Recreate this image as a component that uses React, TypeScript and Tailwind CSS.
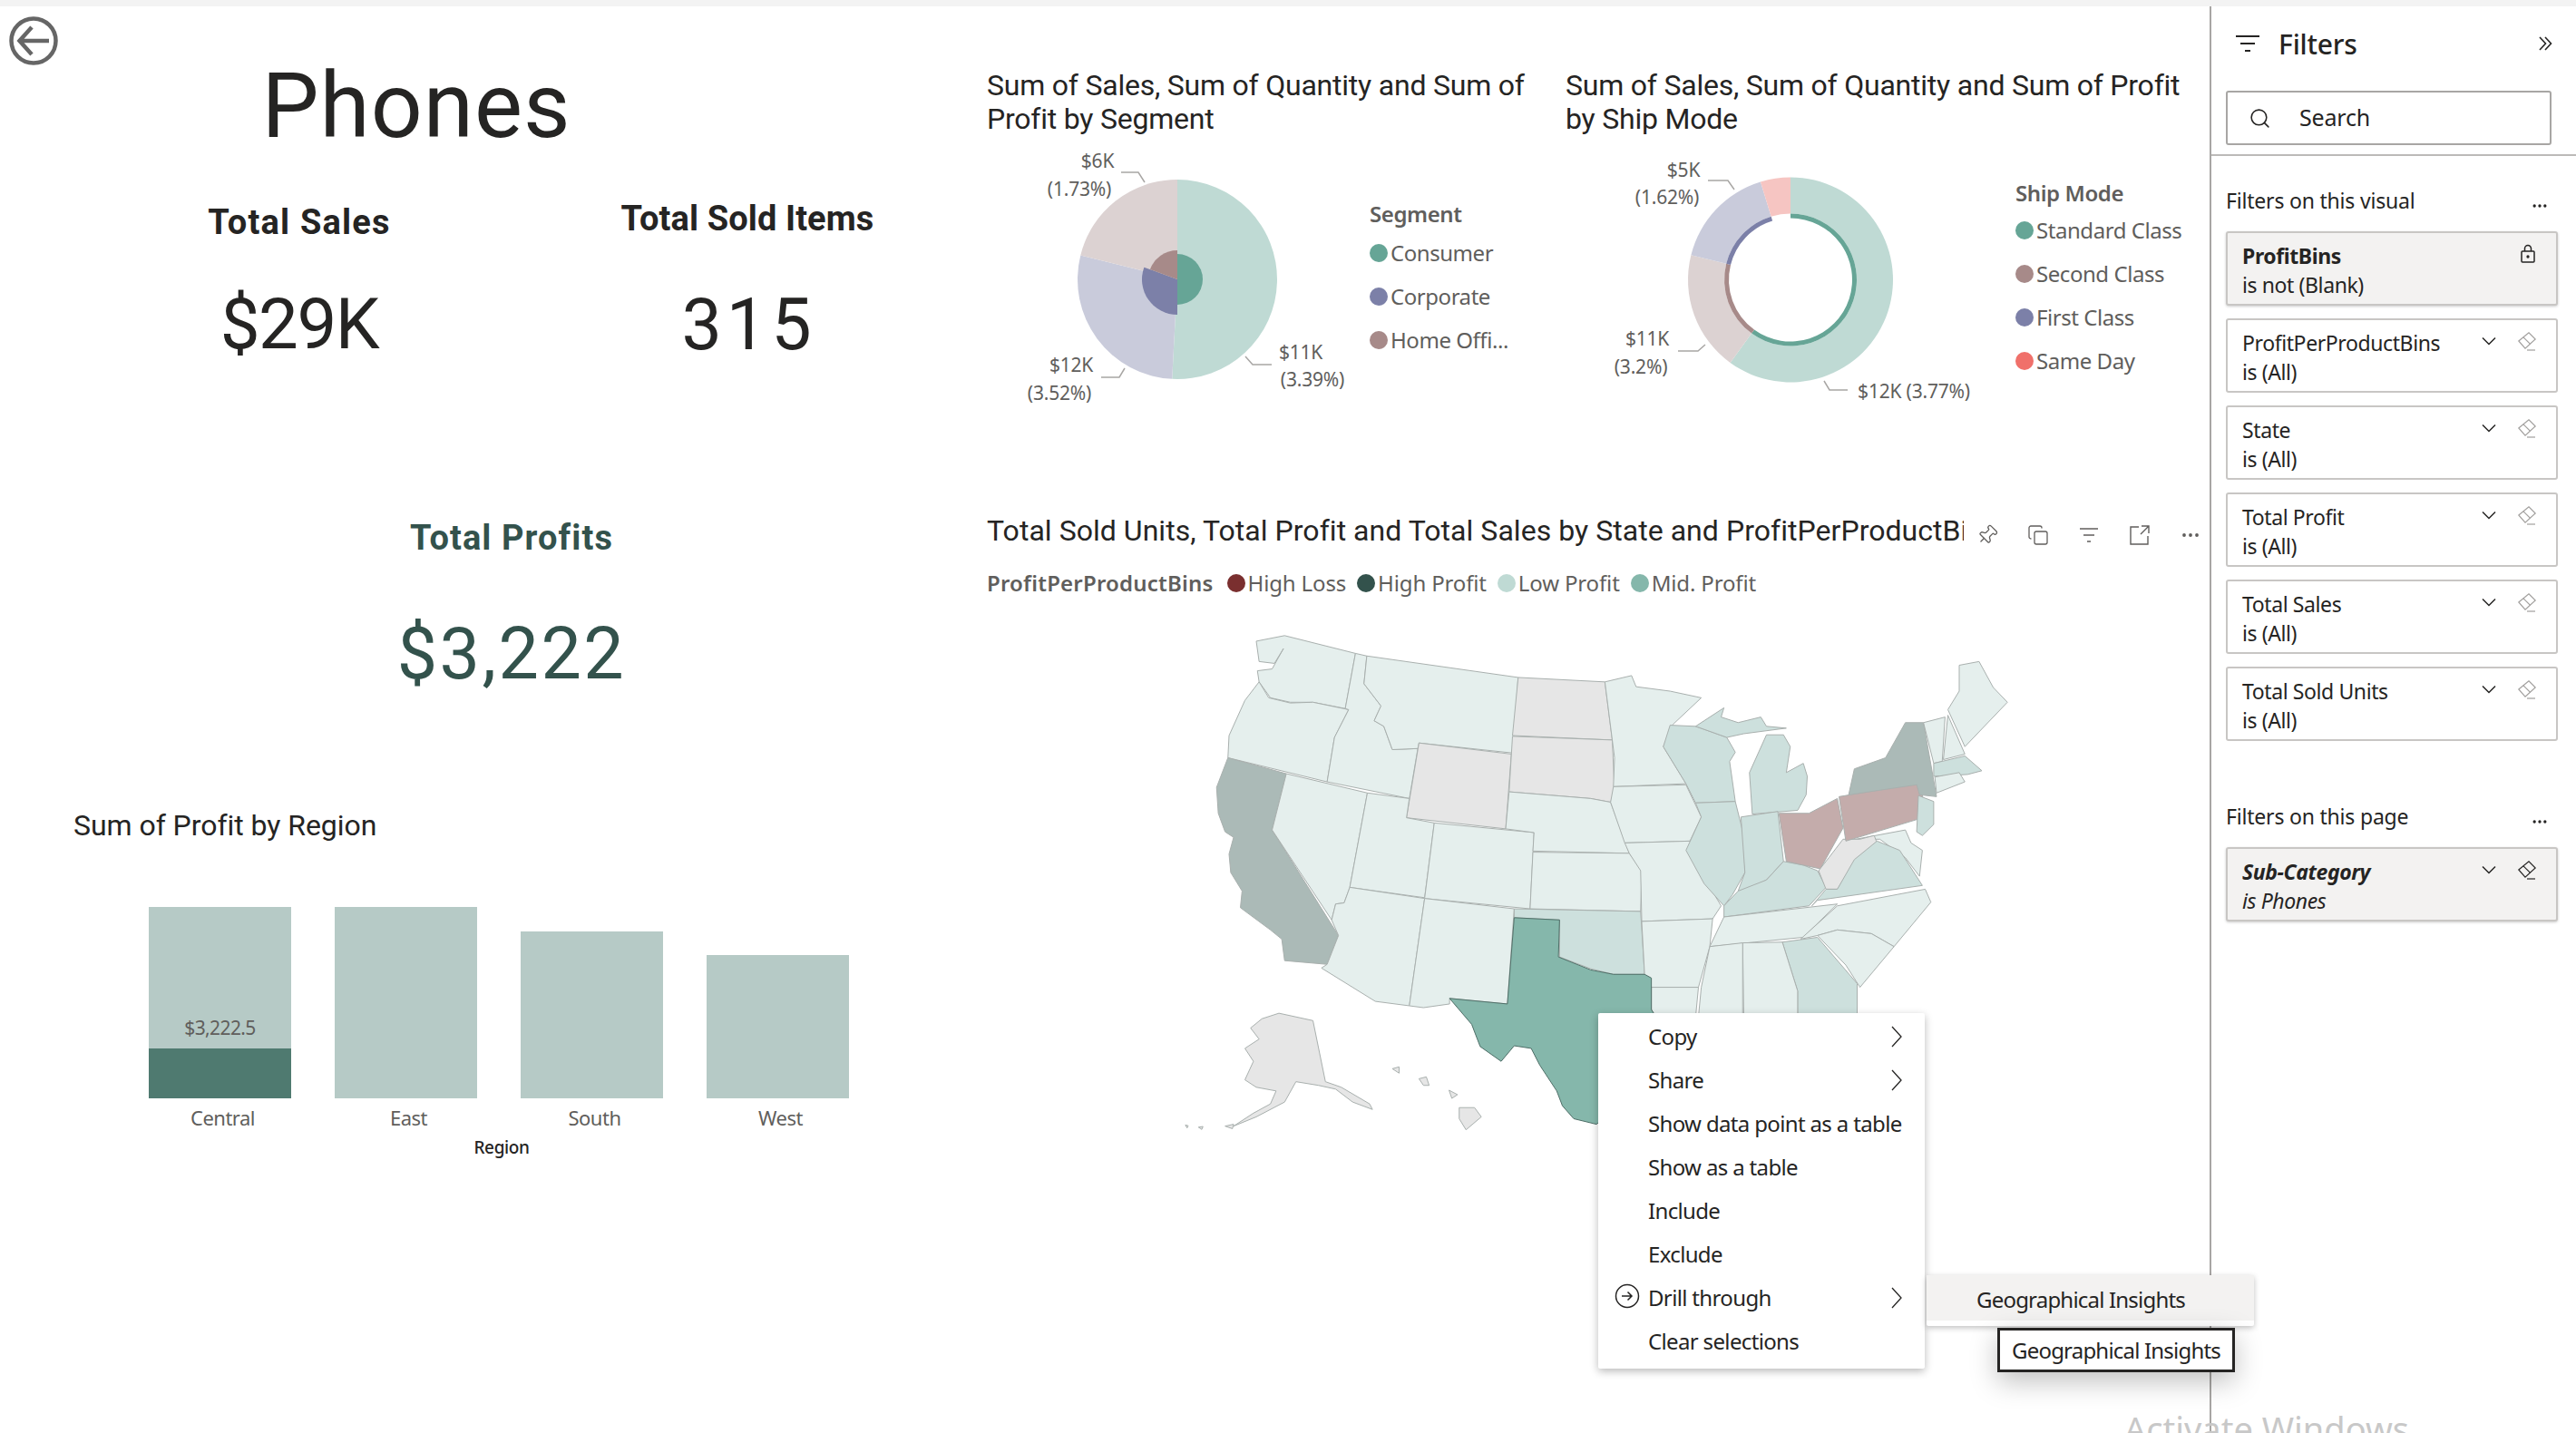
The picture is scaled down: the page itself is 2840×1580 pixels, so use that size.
import { Copy, Ellipsis, Pin, Search } from 'lucide-react';

const cx = (...c: string[]) => c.join(' ');

// map shapes are traced in a 1568x1568 box that gets stretched to 980x640
const STATE_LIGHT = '#e5efed';
const STATE_MID = '#cde0dd';
const STATE_GRAY = '#e6e6e6';

const states: { fill: string; pts: string; stroke?: string }[] = [
    { fill: STATE_LIGHT, pts: '200,115 250,100 375,148 357,297 300,280 260,280 225,268 205,225 202,195 228,190 248,135 232,175 205,170' },
    { fill: STATE_LIGHT, pts: '205,225 222,268 260,282 300,280 363,300 338,375 325,495 150,430 152,370 180,275' },
    { fill: '#abbab7', pts: '150,430 253,473 228,625 345,910 325,988 250,978 245,920 225,895 172,835 175,790 155,740 152,690 160,645 145,630 133,580 130,510' },
    { fill: STATE_LIGHT, pts: '253,473 396,525 365,780 355,822 340,825 333,868 228,625' },
    { fill: STATE_LIGHT, pts: '375,148 395,155 390,230 420,290 408,330 425,345 440,408 485,405 470,540 325,495 338,375 363,300 357,297' },
    { fill: STATE_LIGHT, pts: '395,155 662,213 652,417 487,390 485,405 440,408 425,345 408,330 420,290 390,230' },
    { fill: STATE_GRAY, pts: '487,390 650,420 640,622 465,592' },
    { fill: STATE_LIGHT, pts: '396,525 470,540 465,592 514,606 497,808 365,780' },
    { fill: STATE_LIGHT, pts: '365,780 497,810 470,1100 410,1088 315,998 325,988 345,910 333,868 340,825 355,822' },
    { fill: STATE_LIGHT, pts: '514,606 690,632 683,838 497,810' },
    { fill: STATE_LIGHT, pts: '497,810 655,838 643,1095 541,1080 541,1095 495,1105 470,1100' },
    { fill: STATE_GRAY, pts: '662,213 815,225 828,382 652,370' },
    { fill: STATE_GRAY, pts: '652,372 828,382 832,520 825,550 790,540 646,522' },
    { fill: STATE_LIGHT, pts: '646,522 790,540 825,550 858,688 688,682 690,632 640,622' },
    { fill: STATE_LIGHT, pts: '688,685 858,688 880,735 878,845 683,838' },
    { fill: STATE_MID, pts: '655,838 878,845 885,1015 830,1015 790,1000 735,968 735,868 655,862' },
    { fill: STATE_LIGHT, pts: '815,225 862,208 870,238 930,250 985,268 935,340 918,400 958,500 830,508 832,430 828,382' },
    { fill: STATE_LIGHT, pts: '830,508 958,503 985,590 965,655 850,660 825,550' },
    { fill: STATE_LIGHT, pts: '850,660 965,655 985,740 1020,830 1005,865 880,872 878,735 858,688' },
    { fill: STATE_LIGHT, pts: '880,872 1005,865 1000,940 980,1050 897,1050 885,1015' },
    { fill: STATE_LIGHT, pts: '897,1050 980,1050 975,1130 905,1130 897,1110' },
    { fill: STATE_MID, pts: '930,342 975,345 1030,375 1045,415 1035,440 1045,548 975,552 958,500 918,400' },
    { fill: STATE_MID, pts: '975,345 1000,320 1025,295 1020,320 1050,335 1090,320 1100,345 1135,350 1060,365 1030,375' },
    { fill: STATE_MID, pts: '1100,368 1130,368 1142,400 1135,470 1165,445 1172,480 1170,530 1155,572 1075,582 1070,470' },
    { fill: STATE_MID, pts: '975,552 1045,548 1060,640 1062,740 1040,800 1025,830 990,770 958,680 985,590' },
    { fill: STATE_MID, pts: '1055,590 1120,575 1130,710 1100,760 1060,790 1050,790 1062,740' },
    { fill: STATE_MID, pts: '1130,710 1165,720 1190,735 1205,780 1175,830 1025,860 1025,830 1050,790 1100,760' },
    { fill: '#c4acab', pts: '1122,580 1175,580 1225,540 1235,620 1195,730 1165,720 1135,710' },
    { fill: STATE_LIGHT, pts: '1240,655 1345,625 1355,660 1375,680 1370,750 1345,700 1300,650 1265,650' },
    { fill: STATE_GRAY, pts: '1210,700 1235,650 1265,650 1290,640 1295,660 1260,700 1225,785 1205,785 1192,735' },
    { fill: STATE_MID, pts: '1180,830 1205,785 1225,785 1255,705 1295,655 1335,680 1375,775 1190,815' },
    { fill: '#c4acab', pts: '1228,535 1365,500 1375,530 1380,590 1240,655' },
    { fill: '#abbab7', pts: '1245,530 1255,460 1310,430 1345,335 1377,335 1400,535 1370,530 1365,503' },
    { fill: STATE_MID, pts: '1368,532 1395,548 1395,610 1375,640 1365,630' },
    { fill: STATE_LIGHT, pts: '1377,335 1415,320 1410,440 1395,445' },
    { fill: STATE_LIGHT, pts: '1420,315 1450,420 1412,435' },
    { fill: STATE_LIGHT, pts: '1440,180 1475,170 1500,240 1525,280 1450,400 1420,300 1440,250' },
    { fill: STATE_MID, pts: '1395,445 1450,425 1480,465 1455,475 1395,480' },
    { fill: STATE_LIGHT, pts: '1397,482 1440,470 1450,495 1400,525' },
    { fill: STATE_LIGHT, pts: '1025,860 1225,825 1165,915 1000,940' },
    { fill: STATE_LIGHT, pts: '1160,920 1225,830 1380,785 1390,820 1325,940 1285,905 1225,895 1190,910' },
    { fill: STATE_LIGHT, pts: '1190,910 1225,895 1285,905 1325,940 1265,1050 1240,990' },
    { fill: STATE_MID, pts: '1128,928 1190,915 1260,1040 1260,1130 1155,1130 1155,1060' },
    { fill: STATE_LIGHT, pts: '1058,930 1128,928 1155,1060 1155,1130 1060,1130' },
    { fill: STATE_LIGHT, pts: '1000,940 1058,930 1058,1130 980,1130 985,1050' },
    { fill: '#85b7ab', stroke: '#4f6f68', pts: '655,862 735,868 733,968 790,1003 830,1015 885,1015 897,1025 897,1110 905,1130 900,1300 800,1420 760,1405 740,1370 730,1330 700,1260 685,1215 655,1208 632,1250 595,1210 580,1150 541,1080 643,1095' },
    { fill: STATE_GRAY, pts: '210,1135 240,1120 300,1140 322,1305 350,1320 400,1365 405,1380 370,1360 340,1325 310,1315 270,1305 250,1360 200,1400 160,1425 195,1390 225,1365 235,1330 200,1320 180,1300 195,1250 180,1215 205,1190 190,1160' },
    { fill: STATE_GRAY, pts: '145,1425 160,1420 158,1432' },
    { fill: STATE_GRAY, pts: '98,1428 106,1426 104,1434' },
    { fill: STATE_GRAY, pts: '75,1422 80,1424 78,1430' },
    { fill: STATE_GRAY, pts: '558,1375 585,1375 597,1400 570,1435 558,1405' },
    { fill: STATE_GRAY, pts: '487,1297 500,1292 505,1315 495,1315' },
    { fill: STATE_GRAY, pts: '440,1270 452,1265 452,1282' },
    { fill: STATE_GRAY, pts: '540,1328 555,1340 545,1350' },
];

function slice(cxp: number, cyp: number, r0: number, r1: number, a0: number, a1: number) {
    const p = (r: number, a: number) => {
        const t = ((a - 90) * Math.PI) / 180;
        return `${cxp + r * Math.cos(t)} ${cyp + r * Math.sin(t)}`;
    };
    const large = a1 - a0 > 180 ? 1 : 0;
    if (r0 === 0) return `M${cxp} ${cyp}L${p(r1, a0)}A${r1} ${r1} 0 ${large} 1 ${p(r1, a1)}Z`;
    return `M${p(r0, a0)}L${p(r1, a0)}A${r1} ${r1} 0 ${large} 1 ${p(r1, a1)}L${p(r0, a1)}A${r0} ${r0} 0 ${large} 0 ${p(r0, a0)}Z`;
}

function ChartLabel({ x, y, children }: { x: number; y: number; children: string }) {
    return (
        <text x={x} y={y} textAnchor="middle" dominantBaseline="central" fontSize={21} fill="#605e5c" fontFamily="'Noto Sans', sans-serif" letterSpacing={-0.2}>
            {children}
        </text>
    );
}

function Leader({ points }: { points: string }) {
    return <polyline points={points} fill="none" stroke="#a8a6a4" strokeWidth={1.5} />;
}

function SegmentPie() {
    return (
        <svg width={412} height={290} viewBox="0 0 412 290" className="shrink-0">
            <path d={slice(210, 148, 0, 110, 0, 183)} fill="#bfdad4" />
            <path d={slice(210, 148, 0, 110, 183, 284)} fill="#c9cbdb" />
            <path d={slice(210, 148, 0, 110, 284, 360)} fill="#dcd2d2" />
            <path d={slice(210, 148, 0, 28, 0, 180)} fill="#66a596" />
            <path d={slice(210, 148, 0, 39, 180, 290)} fill="#7c80a8" />
            <path d={slice(210, 148, 0, 32, 290, 360)} fill="#a78a89" />
            <Leader points="148,30 167,30 174,41" />
            <Leader points="126,256 146,256 152,246" />
            <Leader points="314,242 293,242 285,233" />
            <ChartLabel x={122} y={17}>$6K</ChartLabel>
            <ChartLabel x={102} y={48}>(1.73%)</ChartLabel>
            <ChartLabel x={93} y={242}>$12K</ChartLabel>
            <ChartLabel x={80} y={273}>(3.52%)</ChartLabel>
            <ChartLabel x={346} y={228}>$11K</ChartLabel>
            <ChartLabel x={359} y={258}>(3.39%)</ChartLabel>
        </svg>
    );
}

function ShipDonut() {
    return (
        <svg width={492} height={290} viewBox="0 0 492 290" className="shrink-0">
            <path d={slice(248, 148.5, 73, 113, 0, 216)} fill="#bfdad4" />
            <path d={slice(248, 148.5, 73, 113, 216, 284)} fill="#dcd2d2" />
            <path d={slice(248, 148.5, 73, 113, 284, 343)} fill="#c9cbdb" />
            <path d={slice(248, 148.5, 73, 113, 343, 360)} fill="#f6c5c2" />
            <path d={slice(248, 148.5, 68, 73, 0, 216)} fill="#66a596" />
            <path d={slice(248, 148.5, 68, 73, 216, 284)} fill="#a78a89" />
            <path d={slice(248, 148.5, 68, 73, 284, 343)} fill="#7c80a8" />
            <Leader points="157,39 179,39 186,49" />
            <Leader points="124,227 146,227 154,220" />
            <Leader points="311,270 291,270 285,260" />
            <ChartLabel x={130} y={27}>$5K</ChartLabel>
            <ChartLabel x={112} y={57}>(1.62%)</ChartLabel>
            <ChartLabel x={90} y={213}>$11K</ChartLabel>
            <ChartLabel x={83} y={244}>(3.2%)</ChartLabel>
            <ChartLabel x={384} y={271}>$12K (3.77%)</ChartLabel>
        </svg>
    );
}

function LegendRow({ color, label }: { color: string; label: string }) {
    return (
        <div className="flex items-center gap-[3px] h-[48px] text-[24px] text-[#605e5c] tracking-[-0.45px] whitespace-nowrap">
            <span className="w-[20px] h-[20px] rounded-full shrink-0" style={{ backgroundColor: color }} />
            {label}
        </div>
    );
}

function MapLegend({ color, label }: { color: string; label: string }) {
    return (
        <span className="flex items-center gap-[3px]">
            <span className="w-[20px] h-[20px] rounded-full" style={{ backgroundColor: color }} />
            {label}
        </span>
    );
}

function UsMap() {
    return (
        <svg width={980} height={640} viewBox="0 0 1568 1568" preserveAspectRatio="none" className="ml-[172px] mt-[2px] block">
            {states.map((s, i) => (
                <polygon key={i} points={s.pts} fill={s.fill} stroke={s.stroke ?? '#a9b0ae'} strokeWidth={1} vectorEffect="non-scaling-stroke" strokeLinejoin="round" />
            ))}
        </svg>
    );
}

function Eraser({ color }: { color: string }) {
    return (
        <svg width={20} height={21} viewBox="0 0 20 21" fill="none" stroke={color} strokeWidth={1.2}>
            <path d="M.8 10 12 .8 19.2 8 8 18.2Z" />
            <path d="M6 5.8 13.6 13.4" />
            <path d="M10 20H19" />
        </svg>
    );
}

function FilterCard({ title, value, locked, active }: { title: string; value: string; locked?: boolean; active?: boolean }) {
    return (
        <div
            className={cx(
                'h-[82px] w-[366px] border-2 border-[#c8c6c4] rounded-[3px] pl-[16px] pr-[22px] flex text-[23px] leading-[32px] text-[#252423] tracking-[-0.4px]',
                active || locked ? 'bg-[#f3f2f1] shadow-[0_1px_3px_rgba(0,0,0,0.2)]' : 'bg-white',
            )}
        >
            <div className={cx('flex-1 pt-[9px]', active ? 'italic' : '')}>
                <div className={active || locked ? 'font-bold' : ''}>{title}</div>
                <div>{value}</div>
            </div>
            {locked ? (
                <div className="pt-[12px]">
                    <svg width={18} height={22} viewBox="0 0 18 22" fill="none" stroke="#252423" strokeWidth={1.5}>
                        <rect x={2} y={8} width={14} height={12} rx={1} />
                        <path d="M5.5 8V5a3.5 3.5 0 0 1 7 0v3" />
                        <circle cx={9} cy={14} r={0.9} fill="#252423" />
                    </svg>
                </div>
            ) : (
                <div className="flex items-start gap-[24px] pt-[13px]">
                    <svg width={16} height={20} viewBox="0 0 16 20" fill="none" stroke="#252423" strokeWidth={1.5}>
                        <path d="M1 6.5 8 13.5 15 6.5" />
                    </svg>
                    <Eraser color={active ? '#252423' : '#a19f9d'} />
                </div>
            )}
        </div>
    );
}

function SectionHead({ label, className }: { label: string; className: string }) {
    return (
        <div className={cx('h-[32px] w-[366px] flex items-center justify-between text-[23px] text-[#252423] tracking-[-0.2px]', className)}>
            {label}
            <Ellipsis size={20} color="#252423" strokeWidth={2} className="mt-[12px] mr-[10px]" />
        </div>
    );
}

function MenuItem({ label, sub, icon }: { label: string; sub?: boolean; icon?: boolean }) {
    return (
        <div className="h-[48px] flex items-center pl-[55px] pr-[20px] relative text-[24px] text-[#252423] tracking-[-0.65px] whitespace-nowrap">
            {icon && (
                <svg width={28} height={28} viewBox="0 0 28 28" fill="none" stroke="#252423" strokeWidth={1.5} className="absolute left-[18px] top-[8px]">
                    <circle cx={14} cy={14} r={12.5} />
                    <path d="M8 14h11M14.5 9.5l4.5 4.5-4.5 4.5" />
                </svg>
            )}
            <span className="flex-1">{label}</span>
            {sub && (
                <svg width={14} height={24} viewBox="0 0 14 24" fill="none" stroke="#252423" strokeWidth={1.3} className="absolute right-[24px]">
                    <path d="M2 1l10 11L2 23" />
                </svg>
            )}
        </div>
    );
}

export default function App() {
    const din = "font-['Roboto',sans-serif]";
    const region = [
        { name: 'Central', top: 0 },
        { name: 'East', top: 0 },
        { name: 'South', top: 27 },
        { name: 'West', top: 53 },
    ];

    return (
        <div className="w-[2840px] h-[1580px] overflow-hidden bg-white flex flex-col relative font-['Noto_Sans',sans-serif]">
            <div className="h-[7px] bg-[#f3f3f3] shrink-0" />
            <div className="flex-1 flex min-h-0">
                {/* left column */}
                <div className={cx('w-[1088px] shrink-0', din)}>
                    <svg width={54} height={54} viewBox="0 0 54 54" fill="none" stroke="#666666" strokeWidth={4.5} className="mt-[11px] ml-[10px] block">
                        <circle cx={27} cy={27} r={24.5} />
                        <path d="M44 27H12M25 12 11.5 27 25 42" />
                    </svg>
                    <div className="w-[918px] h-[90px] text-center text-[100px] leading-[90px] text-[#252423] tracking-[1px]">Phones</div>
                    <div className="flex text-[#252423]">
                        <div className="w-[660px] text-center pt-[4px]">
                            <div className="mt-[54px] h-[50px] text-[38px] leading-[50px] font-bold tracking-[1.2px]">Total Sales</div>
                            <div className="mt-[43px] h-[90px] text-[78px] leading-[90px] tracking-[-1.5px]">$29K</div>
                        </div>
                        <div className="w-[328px] text-center">
                            <div className="mt-[54px] h-[50px] text-[38px] leading-[50px] font-bold tracking-[0.1px]">Total Sold Items</div>
                            <div className="mt-[47px] h-[90px] text-[79px] leading-[90px] tracking-[5px] pl-[3px]">315</div>
                        </div>
                    </div>
                    <div className="ml-[340px] w-[448px] text-center text-[#33524c]">
                        <div className="mt-[165px] h-[50px] text-[38px] leading-[50px] font-bold tracking-[1.1px]">Total Profits</div>
                        <div className="mt-[58px] h-[90px] text-[79px] leading-[90px] tracking-[2.5px]">$3,222</div>
                    </div>
                    <div className="mt-[124px] ml-[81px] h-[40px] text-[32px] leading-[40px] text-[#252423] tracking-[-0.05px]">Sum of Profit by Region</div>
                    <div className="mt-[70px] ml-[164px] flex items-end gap-[48px] h-[211px]">
                        {region.map((r) => (
                            <div key={r.name} className="w-[157px] bg-[#b6cac6] flex flex-col justify-end" style={{ height: 211 - r.top }}>
                                {r.name === 'Central' && (
                                    <>
                                        <div className="text-center text-[21px] leading-[30px] mb-[8px] text-[#605e5c] font-['Noto_Sans',sans-serif] tracking-[-0.6px]">$3,222.5</div>
                                        <div className="h-[55px] bg-[#4f7a70]" />
                                    </>
                                )}
                            </div>
                        ))}
                    </div>
                    <div className="mt-[6px] ml-[167px] flex gap-[48px] font-['Noto_Sans',sans-serif] tracking-[-0.5px]">
                        {region.map((r) => (
                            <div key={r.name} className="w-[157px] h-[30px] text-center text-[22px] leading-[30px] text-[#605e5c]">{r.name}</div>
                        ))}
                    </div>
                    <div className="mt-[6px] ml-[353px] w-[400px] h-[24px] text-center text-[19px] leading-[24px] font-medium text-[#252423] font-['Noto_Sans',sans-serif] tracking-[-0.4px]">Region</div>
                </div>

                {/* middle column */}
                <div className="w-[1348px] shrink-0 pt-[69px]">
                    <div className="flex">
                        <div className="w-[638px] shrink-0">
                            <div className={cx('h-[74px] text-[32px] leading-[37px] text-[#252423] pr-[20px] tracking-[-0.22px]', din)}>Sum of Sales, Sum of Quantity and Sum of Profit by Segment</div>
                            <div className="mt-[10px] flex">
                                <SegmentPie />
                                <div className="ml-[10px] pt-[57px]">
                                    <div className="h-[38px] text-[24px] leading-[38px] font-semibold text-[#605e5c] tracking-[-0.4px]">Segment</div>
                                    <LegendRow color="#66a596" label="Consumer" />
                                    <LegendRow color="#7c80a8" label="Corporate" />
                                    <LegendRow color="#a78a89" label="Home Offi..." />
                                </div>
                            </div>
                        </div>
                        <div className="w-[710px] shrink-0">
                            <div className={cx('h-[74px] text-[32px] leading-[37px] text-[#252423] pr-[20px] tracking-[-0.22px]', din)}>Sum of Sales, Sum of Quantity and Sum of Profit by Ship Mode</div>
                            <div className="mt-[10px] flex">
                                <ShipDonut />
                                <div className="ml-[4px] pt-[36px]">
                                    <div className="h-[34px] text-[24px] leading-[34px] font-semibold text-[#605e5c] tracking-[-0.4px]">Ship Mode</div>
                                    <LegendRow color="#66a596" label="Standard Class" />
                                    <LegendRow color="#a78a89" label="Second Class" />
                                    <LegendRow color="#7c80a8" label="First Class" />
                                    <LegendRow color="#f0706a" label="Same Day" />
                                </div>
                            </div>
                        </div>
                    </div>

                    <div className="mt-[115px] h-[40px] flex items-center">
                        <div className={cx('w-[1077px] overflow-hidden whitespace-nowrap text-[32px] leading-[40px] text-[#252423] tracking-[0.04px]', din)}>
                            Total Sold Units, Total Profit and Total Sales by State and ProfitPerProductBins
                        </div>
                        <div className="flex items-center gap-[32px] ml-[14px] pt-[10px] text-[#605e5c]">
                            <Pin size={24} strokeWidth={1.3} className="rotate-45" />
                            <Copy size={24} strokeWidth={1.3} />
                            <svg width={24} height={24} viewBox="0 0 24 24" fill="none" stroke="#605e5c" strokeWidth={1.5}>
                                <path d="M2 5h20M6 12h12M10 19h4" />
                            </svg>
                            <svg width={24} height={24} viewBox="0 0 24 24" fill="none" stroke="#605e5c" strokeWidth={1.4}>
                                <path d="M11 3H2v19h19v-9M14 2h8v8M22 2l-9 9" />
                            </svg>
                            <Ellipsis size={24} strokeWidth={1.8} />
                        </div>
                    </div>
                    <div className="mt-[23px] h-[30px] flex items-center gap-[12px] text-[24px] leading-[30px] text-[#605e5c] tracking-[-0.15px] whitespace-nowrap">
                        <span className="font-semibold mr-[3px] tracking-[0.2px]">ProfitPerProductBins</span>
                        <MapLegend color="#7a2f2f" label="High Loss" />
                        <MapLegend color="#33524c" label="High Profit" />
                        <MapLegend color="#bfdad4" label="Low Profit" />
                        <MapLegend color="#85b7ab" label="Mid. Profit" />
                    </div>
                    <UsMap />
                </div>

                {/* filter pane */}
                <div className="flex-1 border-l-2 border-[#a8a6a4] min-w-0">
                    <div className="h-[82px] pl-[27px] pr-[26px] flex items-center text-[#252423]">
                        <svg width={26} height={20} viewBox="0 0 26 20" fill="none" stroke="#252423" strokeWidth={2.2}>
                            <path d="M0 2h26M5 10h16M10 18h6" />
                        </svg>
                        <span className="ml-[21px] flex-1 text-[30px] font-medium tracking-[-0.2px]">Filters</span>
                        <svg width={15} height={16} viewBox="0 0 15 16" fill="none" stroke="#252423" strokeWidth={1.6}>
                            <path d="M1 1l6.5 7L1 15M7 1l6.5 7L7 15" />
                        </svg>
                    </div>
                    <div className="mt-[11px] ml-[16px] w-[359px] h-[60px] border-2 border-[#a8a6a4] rounded-[3px] flex items-center pl-[23px] text-[25px] text-[#252423] tracking-[-0.2px]">
                        <Search size={25} strokeWidth={1.5} />
                        <span className="ml-[31px]">Search</span>
                    </div>
                    <div className="mt-[10px] h-[2px] bg-[#bcbab8]" />
                    <div className="pl-[16px]">
                        <SectionHead label="Filters on this visual" className="mt-[33px]" />
                        <div className="mt-[18px] flex flex-col gap-[14px]">
                            <FilterCard title="ProfitBins" value="is not (Blank)" locked />
                            <FilterCard title="ProfitPerProductBins" value="is (All)" />
                            <FilterCard title="State" value="is (All)" />
                            <FilterCard title="Total Profit" value="is (All)" />
                            <FilterCard title="Total Sales" value="is (All)" />
                            <FilterCard title="Total Sold Units" value="is (All)" />
                        </div>
                        <SectionHead label="Filters on this page" className="mt-[67px]" />
                        <div className="mt-[18px]">
                            <FilterCard title="Sub-Category" value="is Phones" active />
                        </div>
                    </div>
                </div>
            </div>

            {/* context menu */}
            <div className="absolute left-[1762px] top-[1117px] w-[360px] pt-[2px] pb-[6px] bg-white shadow-[0_3px_10px_rgba(0,0,0,0.28)] rounded-[2px]">
                <MenuItem label="Copy" sub />
                <MenuItem label="Share" sub />
                <MenuItem label="Show data point as a table" />
                <MenuItem label="Show as a table" />
                <MenuItem label="Include" />
                <MenuItem label="Exclude" />
                <MenuItem label="Drill through" sub icon />
                <MenuItem label="Clear selections" />
            </div>
            <div className="absolute left-[2124px] top-[1406px] w-[361px] h-[56px] bg-white shadow-[0_2px_6px_rgba(0,0,0,0.25)] rounded-[2px]">
                <div className="h-[50px] bg-[#f3f2f1] pl-[55px] pt-[4px] flex items-center text-[24px] text-[#252423] tracking-[-0.8px]">Geographical Insights</div>
            </div>
            <div className="absolute left-[2202px] top-[1464px] w-[262px] h-[49px] bg-white border-[3px] border-[#252423] pl-[13px] flex items-center text-[24px] text-[#252423] tracking-[-0.8px] whitespace-nowrap shadow-[0_10px_30px_rgba(0,0,0,0.25)]">Geographical Insights</div>
            <div className="absolute left-[2342px] top-[1552px] text-[38px] leading-[46px] text-[#c8c8c8] whitespace-nowrap">Activate Windows</div>
        </div>
    );
}
